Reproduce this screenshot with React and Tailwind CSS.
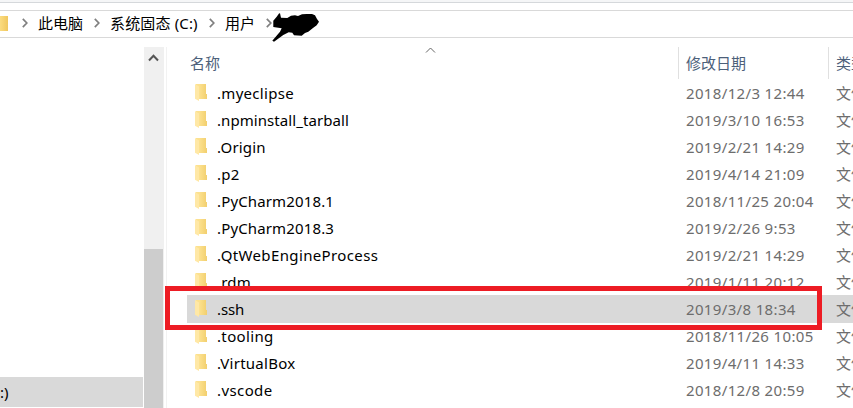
const rows = [
  ['.myeclipse', '2018/12/3 12:44', 'tracking-[0.3px]'],
  ['.npminstall_tarball', '2019/3/10 16:53', 'tracking-[0.07px]'],
  ['.Origin', '2019/2/21 14:29', 'tracking-[0.2px]'],
  ['.p2', '2019/4/14 21:09', 'tracking-[0.2px]'],
  ['.PyCharm2018.1', '2018/11/25 20:04', 'tracking-[0.14px]'],
  ['.PyCharm2018.3', '2019/2/26 9:53', 'tracking-[0.14px]'],
  ['.QtWebEngineProcess', '2019/2/21 14:29', 'tracking-[0.37px]'],
  ['.rdm', '2019/1/11 20:12', 'tracking-[0.2px]'],
  ['.ssh', '2019/3/8 18:34', 'tracking-[-0.1px]'],
  ['.tooling', '2018/11/26 10:05', 'tracking-[0.35px]'],
  ['.VirtualBox', '2019/4/11 14:33', 'tracking-[0.25px]'],
  ['.vscode', '2018/12/8 20:59', 'tracking-[0.4px]'],
];

function Folder() {
  return (
    <svg width="13" height="18" viewBox="0 0 13 18" className="mt-1 shrink-0 self-start">
      <defs>
        <linearGradient id="folderBack" x1="0" x2="1" y1="0" y2="0">
          <stop offset="0.3" stopColor="#fce18f" />
          <stop offset="1" stopColor="#f2cf6e" />
        </linearGradient>
      </defs>
      <path d="M1 0H11V10H12V15H1Z" fill="url(#folderBack)" />
      <path d="M0 0L4 2.5V17L0 14.8Z" fill="#ffe8a6" />
    </svg>
  );
}

function Crumb({ className }) {
  return (
    <svg width="6" height="10" viewBox="0 0 6 10" className={`shrink-0 ${className ?? ''}`} fill="none" stroke="#808080" strokeWidth="1.7">
      <path d="M0.8 0.8L4.8 5L0.8 9.2" />
    </svg>
  );
}

function Row({ name, date, tracking, selected }) {
  return (
    <div className={`flex h-[27px] items-center ${selected ? 'bg-[#d9d9d9] shadow-[0_-1px_0_#d9d9d9]' : ''}`}>
      <div className="flex h-full w-[499px] shrink-0 items-center pl-2">
        <Folder />
        <span className={`ml-[9px] text-black ${tracking}`}>{name}</span>
      </div>
      <span className="w-[150px] shrink-0 tracking-[0.35px] text-[#6d6d6d]">{date}</span>
      <span className="shrink-0 text-[#6d6d6d]">文件夹</span>
    </div>
  );
}

export default function App() {
  return (
    <div className="relative flex h-[408px] w-[853px] flex-col overflow-hidden whitespace-nowrap bg-white font-['Noto_Sans','Noto_Sans_CJK_SC',sans-serif] text-[15px] leading-[27px]">
      <div className="h-[3px] shrink-0 border-b border-[#d5d8db] bg-[#f5f6f7]" />
      <div className="mt-[7px] flex h-7 shrink-0 items-center border-y border-[#d9d9d9] pb-[2px] text-black">
        <div className="mt-px h-[15px] w-2 shrink-0 bg-gradient-to-r from-[#fbdc80] to-[#f0c75e]" />
        <Crumb className="ml-[14px]" />
        <span className="ml-[10px] w-[56px]">此电脑</span>
        <Crumb />
        <span className="ml-[10px] w-[99px] tracking-[0.15px]">系统固态 (C:)</span>
        <Crumb />
        <span className="ml-[10px] w-[41px]">用户</span>
        <Crumb />
      </div>
      <div className="mt-[9px] flex min-h-0 flex-1">
        <div className="flex w-[143px] shrink-0 flex-col pt-[330px]">
          <div className="h-[30px] shrink-0 bg-[#d9d9d9] leading-[31px] text-black">:)</div>
        </div>
        <div className="ml-px flex w-5 shrink-0 flex-col bg-[#f0f0f0]">
          <div className="flex h-[202px] shrink-0 justify-center pt-[7px]">
            <svg width="11" height="8" viewBox="0 0 11 8" fill="none" stroke="#555" strokeWidth="2" className="-ml-px">
              <path d="M1 6.5L5.5 1.8L10 6.5" />
            </svg>
          </div>
          <div className="w-[19px] flex-1 bg-[#cdcdcd]" />
        </div>
        <div className="ml-[2px] flex-1 overflow-hidden border-l border-[#f2f2f2] pl-5">
          <div className="flex h-8 text-[#4c607a]">
            <div className="relative w-[491px] shrink-0 pl-[3px] leading-8">
              名称
              <svg width="11" height="7" viewBox="0 0 11 7" className="absolute left-[238px] top-0" fill="none" stroke="#666">
                <path d="M1 5.5L5.5 1L10 5.5" />
              </svg>
            </div>
            <div className="w-[150px] shrink-0 border-l border-[#e0e0e0] pl-[7px] leading-8">修改日期</div>
            <div className="shrink-0 border-l border-[#e0e0e0] pl-[7px] leading-8">类型</div>
          </div>
          <div className="pt-px">
            {rows.map(([name, date, tracking]) => (
              <Row key={name} name={name} date={date} tracking={tracking} selected={name === '.ssh'} />
            ))}
          </div>
        </div>
      </div>
      <svg width="50" height="32" viewBox="0 0 50 32" className="absolute left-[271px] top-[11px]">
        <path d="M9 2.3L10 6.7L16.3 7L20 4.8L24 4.3L27 5L31 3.3L35.7 3L41 3L44 4.2L46 8L48 10.7L45.7 14.3L42 17L37.3 20.7L34 22L30.7 24.7L23 24.3L21.3 21.7L17.7 21.2L12.3 24L3 30.7L1.3 29.7L9 20.7L10.7 17.3L2.3 15.9V9.7L5.7 5.7L8 2.5Z" fill="#000" />
      </svg>
      <div className="absolute left-[165px] top-[286px] h-[44px] w-[657px] border-[5px] border-[#ed1c24]" />
    </div>
  );
}
